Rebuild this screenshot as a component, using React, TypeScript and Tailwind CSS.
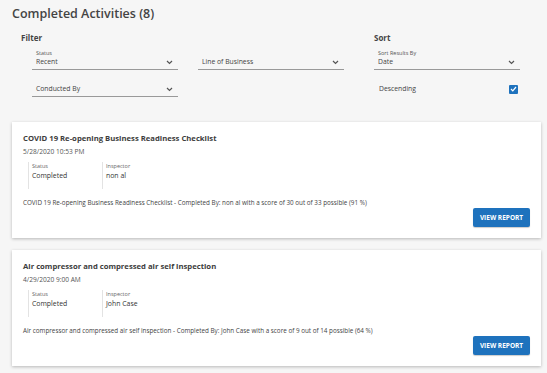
import React from "react";

const font = { fontFamily: "'Open Sans', 'Liberation Sans', sans-serif" };

function Chevron() {
  return (
    <svg width="7" height="5" viewBox="0 0 7 5" className="shrink-0">
      <polyline points="1,1 3.5,3.5 6,1" fill="none" stroke="#555" strokeWidth="1.2" />
    </svg>
  );
}

function SelectField({ label, value }: { label?: string; value: string }) {
  return (
    <div className="flex flex-col w-[146px]">
      {label && <div className="text-[5.5px] leading-[8px] text-[#555] pl-[4px]">{label}</div>}
      <div className="flex items-center justify-between pl-[4px] pr-[5px] pb-[2px] border-b border-[#999]">
        <span className="text-[6.8px] leading-[10px] text-[#444]">{value}</span>
        <Chevron />
      </div>
    </div>
  );
}

type Activity = {
  title: string;
  date: string;
  inspector: string;
  summary: string;
};

const activities: Activity[] = [
  {
    title: "COVID 19 Re-opening Business Readiness Checklist",
    date: "5/28/2020 10:53 PM",
    inspector: "non al",
    summary:
      "COVID 19 Re-opening Business Readiness Checklist - Completed By: non al with a score of 30 out of 33 possible (91 %)",
  },
  {
    title: "Air compressor and compressed air self inspection",
    date: "4/29/2020 9:00 AM",
    inspector: "John Case",
    summary:
      "Air compressor and compressed air self inspection - Completed By: John Case with a score of 9 out of 14 possible (64 %)",
  },
];

function ActivityCard({ a }: { a: Activity }) {
  return (
    <div className="bg-white shadow-[0_1px_3px_rgba(0,0,0,0.25)] px-[11px] pt-[10px] pb-[11px]">
      <div className="text-[7.7px] leading-[12px] font-bold text-[#3d3d3d]">{a.title}</div>
      <div className="mt-[3px] text-[6.6px] leading-[10px] text-[#555]">{a.date}</div>
      <div className="flex mt-[5px] ml-[5px]">
        <div className="w-[74px] border-l border-[#e3e3e3] pl-[3px] pb-[7px]">
          <div className="text-[5.5px] leading-[8px] text-[#666]">Status</div>
          <div className="text-[6.9px] leading-[12px] text-[#333]">Completed</div>
        </div>
        <div className="border-l border-[#e3e3e3] pl-[3px] pb-[7px]">
          <div className="text-[5.5px] leading-[8px] text-[#666]">Inspector</div>
          <div className="text-[6.9px] leading-[12px] text-[#333]">{a.inspector}</div>
        </div>
      </div>
      <div className="mt-[9px] text-[6.3px] leading-[10px] text-[#444]">{a.summary}</div>
      <div className="flex justify-end">
        <button className="w-[57px] h-[19px] bg-[#1e72bd] text-white text-[6.5px] font-bold rounded-[2px] shadow-[0_1px_1px_rgba(0,0,0,0.2)]">
          VIEW REPORT
        </button>
      </div>
    </div>
  );
}

export default function App() {
  return (
    <div className="min-h-screen bg-[#f6f6f6] pl-3 pr-[6px] pb-3" style={font}>
      <h1 className="pt-1 text-[12.5px] leading-[20px] font-semibold text-[#444]">Completed Activities (8)</h1>
      <div className="flex mt-2 pl-[9px]">
        <div className="w-[353px]">
          <div className="text-[8px] leading-[12px] font-bold text-[#444]">Filter</div>
          <div className="pl-[11px] mt-[5px] flex flex-col gap-[14px]">
            <div className="flex items-end gap-[20px]">
              <SelectField label="Status" value="Recent" />
              <SelectField value="Line of Business" />
            </div>
            <SelectField value="Conducted By" />
          </div>
        </div>
        <div className="w-[146px]">
          <div className="text-[8px] leading-[12px] font-bold text-[#444]">Sort</div>
          <div className="mt-[5px] flex flex-col gap-[14px]">
            <SelectField label="Sort Results By" value="Date" />
            <div className="flex items-center justify-between pl-[5px] pr-[2px]">
              <span className="text-[6.8px] leading-[10px] text-[#444]">Descending</span>
              <span className="w-[9px] h-[9px] bg-[#1e72bd] rounded-[1px] flex items-center justify-center">
                <svg width="7" height="6" viewBox="0 0 7 6">
                  <polyline points="1,3 2.8,4.8 6,1" fill="none" stroke="#fff" strokeWidth="1.2" />
                </svg>
              </span>
            </div>
          </div>
        </div>
      </div>
      <div className="mt-[25px] flex flex-col gap-3">
        {activities.map((a) => (
          <ActivityCard key={a.title} a={a} />
        ))}
      </div>
    </div>
  );
}
